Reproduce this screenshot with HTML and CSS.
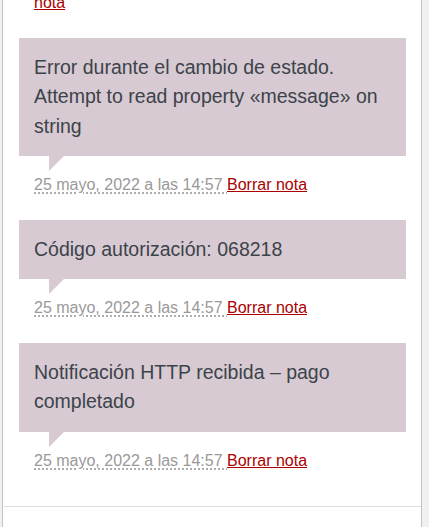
FILE: index.html
```html
<!DOCTYPE html>
<html lang="es">
<head>
    <meta charset="UTF-8">
    <title>Notas del pedido</title>
    <link rel="stylesheet" href="styles.css">
</head>
<body>

    <div class="postbox">
        <ul class="order-notes">
            <li class="note note-tail">
                <p class="meta"><a href="#" class="delete-note">nota</a></p>
            </li>

            <li class="note">
                <div class="note-content">
                    <p>Error durante el cambio de estado. Attempt to read property «message» on string</p>
                </div>
                <p class="meta">
                    <abbr class="exact-date" title="2022-05-25 14:57:00">25 mayo, 2022 a las 14:57 </abbr><a href="#" class="delete-note">Borrar nota</a>
                </p>
            </li>

            <li class="note">
                <div class="note-content">
                    <p>Código autorización: 068218</p>
                </div>
                <p class="meta">
                    <abbr class="exact-date" title="2022-05-25 14:57:00">25 mayo, 2022 a las 14:57 </abbr><a href="#" class="delete-note">Borrar nota</a>
                </p>
            </li>

            <li class="note">
                <div class="note-content">
                    <p>Notificación HTTP recibida – pago completado</p>
                </div>
                <p class="meta">
                    <abbr class="exact-date" title="2022-05-25 14:57:00">25 mayo, 2022 a las 14:57 </abbr><a href="#" class="delete-note">Borrar nota</a>
                </p>
            </li>
        </ul>
        <div class="add-note"></div>
    </div>

</body>
</html>
```

FILE: styles.css
```css
:root {
    --page-bg: #f0f0f1;
    --panel-border: #c3c4c7;
    --divider: #dcdcde;
    --note-bg: #d7cad2;
    --text-color: #3c434a;
    --meta-color: #999;
    --delete-color: #a00;
    --font-body: "Liberation Sans", Arial, sans-serif;
}

body {
    margin: 0;
    background: var(--page-bg);
    font-family: var(--font-body);
    color: var(--text-color);
    height: 527px;
    overflow: hidden;
}

/* --- Panel --- */
.postbox {
    margin-left: 2px;
    width: 418px;
    min-height: 560px;
    background: #fff;
    border-left: 1px solid var(--panel-border);
    border-right: 1px solid var(--panel-border);
}

/* --- Notes list --- */
.order-notes {
    list-style: none;
    margin: 0;
    padding: 0 15px 10px 16px;
}

.note {
    margin-bottom: 10px;
}

/* end of the previous note, scrolled mostly out of view */
.note-tail .meta {
    margin-top: -9px;
    padding-top: 0;
}

.note-content {
    position: relative;
    background: var(--note-bg);
    padding: 15px;
}

.note-content p {
    margin: 0;
    font-size: 19.5px;
    line-height: 29.25px;
}

/* little speech tail under the box */
.note-content::after {
    content: "";
    position: absolute;
    bottom: -15px;
    left: 30px;
    width: 0;
    height: 0;
    border-style: solid;
    border-width: 15px 15px 0 0;
    border-color: var(--note-bg) transparent;
}

.meta {
    margin: 0;
    padding: 17px 15px 13px;
    font-size: 16px;
    line-height: 24px;
    color: var(--meta-color);
}

.exact-date {
    text-decoration: underline dotted;
    text-underline-offset: 3px;
}

.delete-note {
    color: var(--delete-color);
    text-decoration: underline;
}

/* --- Add note area --- */
.add-note {
    margin-left: 1px;
    border-top: 1px solid var(--divider);
}
```
